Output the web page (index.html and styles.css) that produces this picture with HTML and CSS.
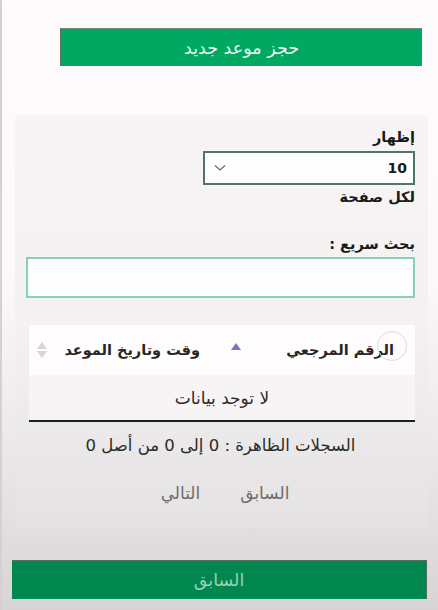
FILE: index.html
```html
<!DOCTYPE html>
<html lang="ar" dir="rtl">
<head>
<meta charset="utf-8">
<link rel="stylesheet" href="styles.css">
</head>
<body>
<div class="page">
  <div class="top-btn">حجز موعد جديد</div>
  <div class="panel">
    <div class="label bold">إظهار</div>
    <div class="select">
      <span class="select-val">10</span>
      <svg class="chev" width="12" height="8" viewBox="0 0 12 8"><path d="M1 1.5 L6 6 L11 1.5" fill="none" stroke="#666" stroke-width="1.1"/></svg>
    </div>
    <div class="label bold per">لكل صفحة</div>
    <div class="label bold search-label">بحث سريع :</div>
    <div class="search"></div>
    <div class="table">
      <div class="thead">
        <div class="th th-ref">
          <span class="ring"></span>
          <span>الرقم المرجعي</span>
          <span class="sort-up"></span>
        </div>
        <div class="th th-date">
          <span>وقت وتاريخ الموعد</span>
          <span class="sort-both"><span class="up"></span><span class="down"></span></span>
        </div>
      </div>
      <div class="empty">لا توجد بيانات</div>
    </div>
    <div class="info">السجلات الظاهرة : 0 إلى 0 من أصل 0</div>
    <div class="pager">
      <span>السابق</span>
      <span>التالي</span>
    </div>
  </div>
  <div class="bottom-btn">السابق</div>
</div>
</body>
</html>
```
FILE: styles.css
```css
html, body {
  margin: 0;
  padding: 0;
  height: 610px;
  overflow: hidden;
}
body {
  font-family: "DejaVu Sans", "Noto Sans", sans-serif;
  background: linear-gradient(to bottom, #fdfbfc 0%, #fbf9fa 45%, #e9e7e7 75%, #d6d4d4 100%);
  border-left: 2px solid #d6cfd3;
  box-sizing: border-box;
  color: #222;
}
.page {
  display: flex;
  flex-direction: column;
  padding-top: 28px;
}
.top-btn {
  margin: 0 16px 0 58px;
  height: 38px;
  background: #00a862;
  color: #eaf6ef;
  font-size: 17.5px;
  display: flex;
  align-items: center;
  justify-content: center;
  border-top: 1px solid #6f8a7e;
  border-left: 1px solid #55705f;
  box-sizing: border-box;
}
.panel {
  margin: 49px 10px 0 13px;
  padding: 12px 13px 0 11px;
  height: 413px;
  box-sizing: border-box;
  background: linear-gradient(to bottom, #f6f4f4 0%, #f3f1f1 50%, #e4e2e2 100%);
  display: flex;
  flex-direction: column;
  align-items: stretch;
}
.label {
  font-size: 14.5px;
  line-height: 20px;
  color: #1a1a1a;
}
.bold { font-weight: bold; }
.select {
  align-self: flex-start;
  margin-top: 4px;
  width: 212px;
  height: 34px;
  box-sizing: border-box;
  border: 2px solid #4f7565;
  background: #fefdfe;
  display: flex;
  align-items: center;
  justify-content: space-between;
  padding: 0 6px 0 9px;
}
.select-val {
  font-size: 14px;
  font-weight: bold;
  color: #1a1a1a;
}
.chev { display: block; }
.per { margin-top: 3px; line-height: 18px; }
.search-label { margin-top: 28px; }
.search {
  margin-top: 3px;
  height: 41px;
  box-sizing: border-box;
  border: 2px solid #86d2b7;
  background: #fefdfe;
}
.table {
  margin: 27px 0 0 3px;
}
.thead {
  height: 50px;
  background: #fefcfd;
  display: flex;
  align-items: center;
  position: relative;
}
.th {
  display: flex;
  align-items: center;
  font-size: 14.5px;
  font-weight: bold;
  color: #262626;
}
.th-ref {
  width: 215px;
  padding-right: 21px;
  box-sizing: border-box;
  position: relative;
  gap: 45px;
}
.ring {
  position: absolute;
  right: 8px;
  top: -16px;
  width: 28px;
  height: 28px;
  border: 1px solid #dcdadc;
  border-radius: 50%;
  margin-top: 5px;
}
.sort-up {
  width: 0;
  height: 0;
  border-left: 5px solid transparent;
  border-right: 5px solid transparent;
  border-bottom: 7px solid #7d73c9;
  margin-top: -7px;
}
.th-date {
  flex: 1;
  gap: 17px;
}
.sort-both {
  display: flex;
  flex-direction: column;
  gap: 2px;
}
.sort-both .up {
  width: 0; height: 0;
  border-left: 5px solid transparent;
  border-right: 5px solid transparent;
  border-bottom: 7px solid #d6d4d6;
}
.sort-both .down {
  width: 0; height: 0;
  border-left: 5px solid transparent;
  border-right: 5px solid transparent;
  border-top: 7px solid #d6d4d6;
}
.empty {
  height: 45px;
  border-bottom: 2px solid #1f1f1f;
  display: flex;
  align-items: center;
  justify-content: center;
  font-size: 17px;
  color: #2a2a2a;
  background: #f6f4f4;
}
.info {
  margin-top: 14px;
  text-align: center;
  font-size: 16.5px;
  color: #2a2a2a;
}
.pager {
  margin-top: 28px;
  display: flex;
  justify-content: center;
  gap: 40px;
  font-size: 17px;
  color: #6e6c6c;
  padding-left: 9px;
}
.bottom-btn {
  margin: 32px 11px 0 10px;
  height: 39px;
  background: #00864f;
  color: #9bd0b4;
  font-size: 17.5px;
  display: flex;
  align-items: center;
  justify-content: center;
  border-top: 1px solid #56705f;
  border-right: 1px solid #4e6d5c;
  box-sizing: border-box;
}
```
